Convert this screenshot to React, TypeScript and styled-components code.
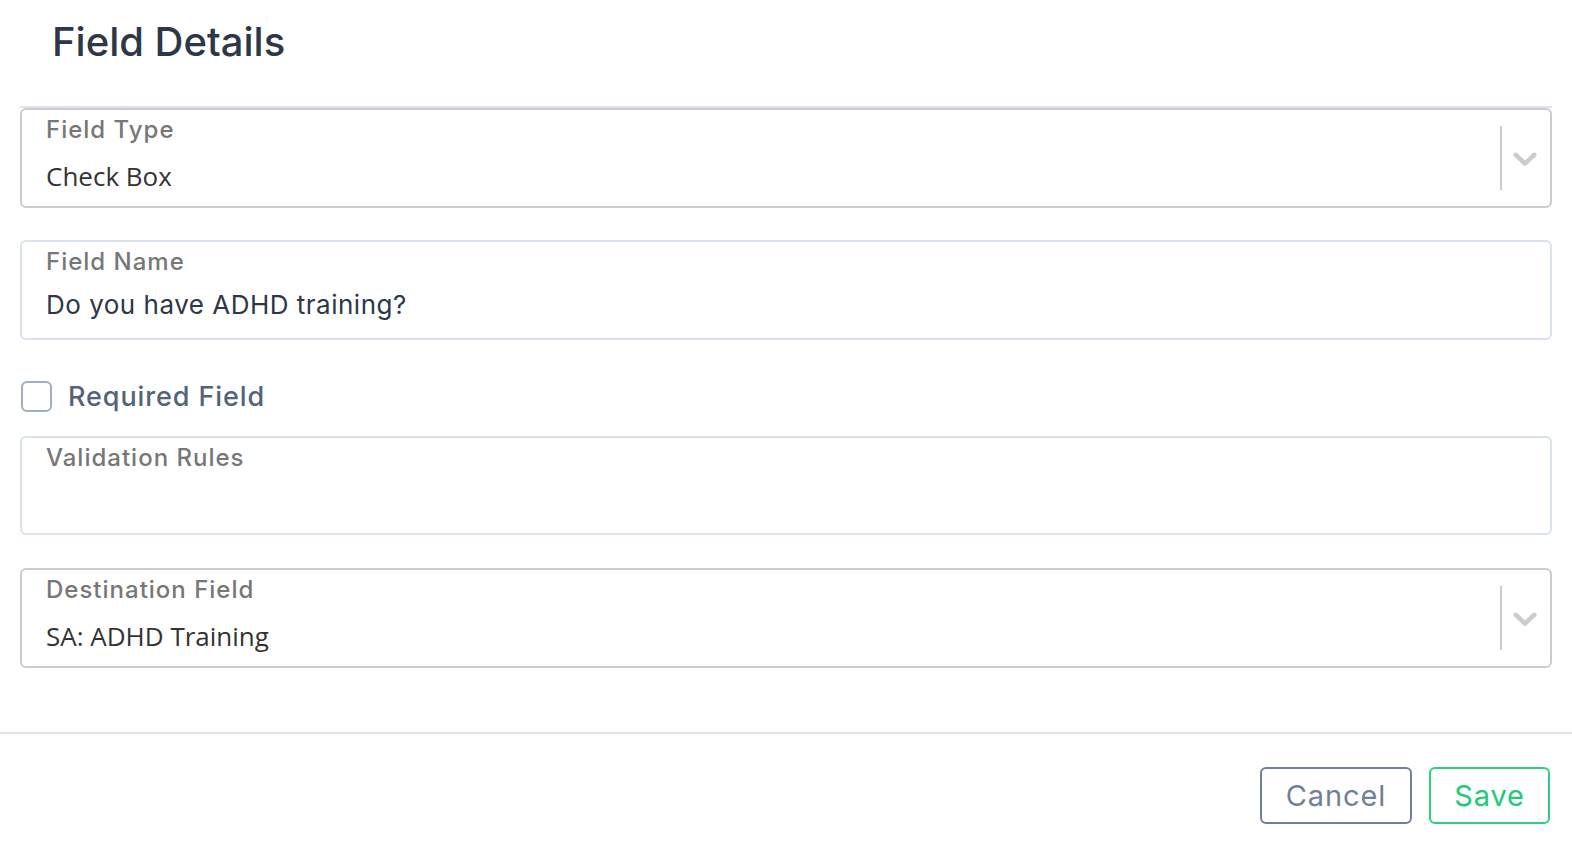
import React from "react";
import styled, { createGlobalStyle } from "styled-components";

const GlobalStyle = createGlobalStyle`
  html, body {
    margin: 0;
    padding: 0;
    background: #ffffff;
  }
  * {
    box-sizing: border-box;
  }
`;

const Page = styled.div`
  width: 1572px;
  height: 842px;
  display: flex;
  flex-direction: column;
  font-family: Inter, "Noto Sans", sans-serif;
  background: #fff;
  overflow: hidden;
`;

const Header = styled.div`
  height: 108px;
  margin: 0 20px;
  padding: 0 32px;
  display: flex;
  align-items: flex-start;
  border-bottom: 2px solid #dbe3ee;
`;

const Title = styled.h1`
  margin: 18px 0 0;
  font-size: 40px;
  line-height: 48px;
  font-weight: 500;
  color: #2d3748;
`;

const Form = styled.div`
  display: flex;
  flex-direction: column;
  padding: 0 20px;
`;

const FieldBox = styled.div<{ $select?: boolean; $mt: number; $h: number }>`
  margin-top: ${(p) => p.$mt}px;
  height: ${(p) => p.$h}px;
  border: 2px solid ${(p) => (p.$select ? "#cccccc" : "#d9e2ee")};
  border-radius: 6px;
  display: flex;
  align-items: stretch;
`;

const FieldBody = styled.div`
  flex: 1;
  padding: 5px 0 0 24px;
  display: flex;
  flex-direction: column;
`;

const Label = styled.div`
  font-size: 24px;
  line-height: 30px;
  font-weight: 500;
  color: #777777;
  letter-spacing: 1px;
`;

const Value = styled.div<{ $plain?: boolean }>`
  margin-top: ${(p) => (p.$plain ? 16 : 13)}px;
  font-family: ${(p) => (p.$plain ? `"Open Sans", sans-serif` : `Inter, sans-serif`)};
  font-size: 26px;
  line-height: 30px;
  letter-spacing: ${(p) => (p.$plain ? 0 : 0.5)}px;
  color: ${(p) => (p.$plain ? "#333333" : "#2d3748")};
`;

const Indicator = styled.div`
  width: 50px;
  display: flex;
  align-items: center;
  justify-content: center;
  position: relative;
  &::before {
    content: "";
    position: absolute;
    left: 0;
    top: 16px;
    bottom: 16px;
    width: 2px;
    background: #cccccc;
  }
`;

const CheckRow = styled.label`
  margin-top: 41px;
  height: 30px;
  display: flex;
  align-items: center;
  gap: 16px;
  cursor: pointer;
`;

const CheckBox = styled.span`
  width: 31px;
  height: 31px;
  margin-left: 1px;
  border: 2px solid #a0aec0;
  border-radius: 6px;
  background: #fff;
`;

const CheckLabel = styled.span`
  font-size: 27px;
  font-weight: 500;
  color: #52637a;
  letter-spacing: 0.9px;
`;

const Footer = styled.div`
  margin-top: 64px;
  border-top: 2px solid #dde3ee;
  padding: 33px 22px 0 0;
  display: flex;
  justify-content: flex-end;
  gap: 17px;
`;

const Button = styled.button<{ $tone: "neutral" | "success"; $w: number }>`
  width: ${(p) => p.$w}px;
  height: 57px;
  background: #fff;
  border: 2px solid ${(p) => (p.$tone === "success" ? "#2dd07f" : "#718096")};
  color: ${(p) => (p.$tone === "success" ? "#22c978" : "#718096")};
  border-radius: 6px;
  font-family: Inter, sans-serif;
  font-size: 29px;
  font-weight: 400;
  letter-spacing: 0.9px;
  cursor: pointer;
`;

const Chevron = () => (
  <svg width="40" height="40" viewBox="0 0 20 20" fill="#cccccc">
    <path d="M4.516 7.548c0.436-0.446 1.043-0.481 1.576 0l3.908 3.747 3.908-3.747c0.533-0.481 1.141-0.446 1.574 0 0.436 0.445 0.408 1.197 0 1.615-0.406 0.418-4.695 4.502-4.695 4.502-0.217 0.223-0.502 0.335-0.787 0.335s-0.57-0.112-0.789-0.335c0 0-4.287-4.084-4.695-4.502s-0.436-1.17 0-1.615z" />
  </svg>
);

export default function App() {
  return (
    <Page>
      <GlobalStyle />
      <Header>
        <Title>Field Details</Title>
      </Header>
      <Form>
        <FieldBox $select $mt={0} $h={100}>
          <FieldBody>
            <Label>Field Type</Label>
            <Value $plain>Check Box</Value>
          </FieldBody>
          <Indicator>
            <Chevron />
          </Indicator>
        </FieldBox>

        <FieldBox $mt={32} $h={100}>
          <FieldBody>
            <Label>Field Name</Label>
            <Value>Do you have ADHD training?</Value>
          </FieldBody>
        </FieldBox>

        <CheckRow>
          <CheckBox />
          <CheckLabel>Required Field</CheckLabel>
        </CheckRow>

        <FieldBox $mt={25} $h={99}>
          <FieldBody>
            <Label>Validation Rules</Label>
          </FieldBody>
        </FieldBox>

        <FieldBox $select $mt={33} $h={100}>
          <FieldBody>
            <Label>Destination Field</Label>
            <Value $plain>SA: ADHD Training</Value>
          </FieldBody>
          <Indicator>
            <Chevron />
          </Indicator>
        </FieldBox>
      </Form>
      <Footer>
        <Button $tone="neutral" $w={152}>Cancel</Button>
        <Button $tone="success" $w={121}>Save</Button>
      </Footer>
    </Page>
  );
}
